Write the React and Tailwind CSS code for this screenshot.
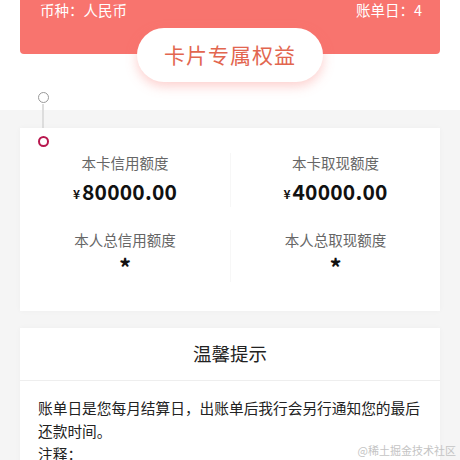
import React from 'react';

const LIMITS = [
  { label: '本卡信用额度', value: '80000.00' },
  { label: '本卡取现额度', value: '40000.00' },
  { label: '本人总信用额度', value: null },
  { label: '本人总取现额度', value: null },
];

function LimitCell({ label, value }) {
  return (
    <div className="flex flex-col items-center">
      <div className="text-[14.5px] leading-[20px] text-[#666]">{label}</div>
      {value ? (
        <div className="mt-[4px] flex h-[30px] items-center text-[#111]">
          <span className="mr-[2px] mt-[4px] text-[12px] font-bold">¥</span>
          <span className="text-[21px] font-bold tracking-[0.2px]">{value}</span>
        </div>
      ) : (
        <div className="mt-[2px] flex h-[30px] items-center text-[24px] font-bold leading-none text-[#111]">*</div>
      )}
    </div>
  );
}

export default function App() {
  return (
    <div
      className="relative h-[460px] w-[460px] overflow-hidden bg-[#f5f5f5]"
      style={{ fontFamily: '"Noto Sans CJK SC", "Noto Sans", sans-serif' }}
    >
      <div className="relative h-[110px] bg-white">
        <div className="mx-[20px] flex h-[54px] items-start justify-between rounded-b-[4px] bg-[#f8746e] pl-[20px] pr-[18px] text-[14.5px] leading-[20px] text-white">
          <span>币种：人民币</span>
          <span>账单日：4</span>
        </div>
        <div className="mx-auto -mt-[26px] flex h-[54px] w-[186px] items-center justify-center rounded-full bg-white text-[21px] tracking-[1px] text-[#e2664f] shadow-[0_4px_12px_rgba(248,116,110,0.35)]">
          卡片专属权益
        </div>
        <div className="absolute left-[38px] top-[92px] h-[11px] w-[11px] rounded-full border-[1.5px] border-[#999]" />
      </div>

      <div className="absolute left-[42px] top-[104px] h-[26px] w-[2px] bg-[#ddd]" />

      <div className="relative mx-[20px] mt-[18px] h-[183px] bg-white pt-[25px] shadow-[0_0_6px_rgba(0,0,0,0.03)]">
        <div className="absolute left-[18px] top-[8px] h-[11px] w-[11px] rounded-full border-[2px] border-[#b8174e]" />
        <div className="grid grid-cols-2 gap-y-[23px]">
          {LIMITS.map((item, i) => (
            <div key={item.label} className={i % 2 === 1 ? 'border-l border-[#f7f7f7]' : ''}>
              <LimitCell {...item} />
            </div>
          ))}
        </div>
      </div>

      <div className="mx-[20px] mt-[17px] bg-white shadow-[0_0_6px_rgba(0,0,0,0.03)]">
        <div className="flex h-[53px] items-center justify-center border-b border-[#eee] text-[18.5px] text-[#222]">
          温馨提示
        </div>
        <div className="px-[18px] pt-[15px] text-[14.7px] leading-[23px] text-[#222]">
          <p>账单日是您每月结算日，出账单后我行会另行通知您的最后还款时间。</p>
          <p>注释：</p>
        </div>
      </div>

      <div className="absolute bottom-[2px] right-[4px] text-[11px] text-[#c4c4c4]">@稀土掘金技术社区</div>
    </div>
  );
}
